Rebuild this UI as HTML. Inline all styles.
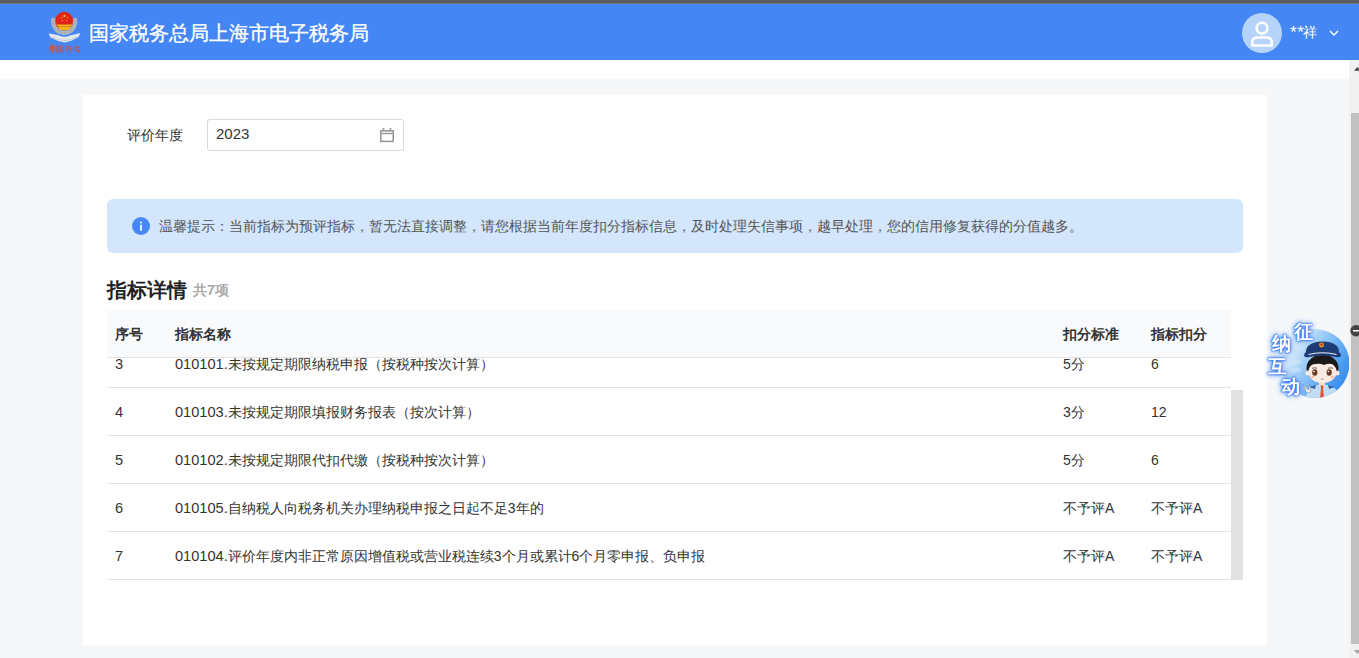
<!DOCTYPE html>
<html><head><meta charset="utf-8">
<style>
*{box-sizing:border-box;margin:0;padding:0}
html,body{width:1359px;height:658px;overflow:hidden;background:#f6f7f9;font-family:"Liberation Sans",sans-serif;color:#333}
div{position:absolute}
.topbar{left:0;top:0;width:1359px;height:4px;background:linear-gradient(#5b5b5f 0,#5b5b5f 3px,#6f7683 3px,#6f7683 4px)}
.header{left:0;top:4px;width:1359px;height:56px;background:#4486f3}
.white{left:0;top:60px;width:1349px;height:19px;background:#fff}
.vscroll{left:1349px;top:60px;width:15px;height:598px;background:#f1f1f1}
.vthumb{left:2px;top:53px;width:11px;height:531px;background:#c1c1c1}
.card{left:83px;top:95px;width:1184px;height:550px;background:#fff}
.title{left:89px;top:20px;font-size:20px;color:#fff;white-space:nowrap;-webkit-text-stroke:0.35px #fff}
.avatar{left:1242px;top:13px;width:40px;height:40px;border-radius:50%;background:#b6d3fa}
.uname{left:1290px;top:23px;font-size:14px;color:#fff;white-space:nowrap}
.label{left:127px;top:127px;font-size:14px;color:#333;white-space:nowrap}
.input{left:207px;top:119px;width:197px;height:32px;border:1px solid #d9d9d9;border-radius:3px;background:#fff}
.input span{position:absolute;left:8px;top:6px;font-size:14px;color:#333}
.alert{left:107px;top:199px;width:1136px;height:54px;background:#d3e6fc;border-radius:6px}
.alert .tx{left:52px;top:19px;font-size:14px;color:#555;white-space:nowrap}
.h2{left:107px;top:277px;font-size:20px;font-weight:bold;color:#222;white-space:nowrap}
.h2s{left:193px;top:282px;font-size:14px;font-weight:bold;color:#aaa;white-space:nowrap}
.thead{left:107px;top:310px;width:1124px;height:48px;background:#f9fafc;border-bottom:1px solid #e4e4e4}
.th{top:16px;font-size:14px;font-weight:bold;color:#333;white-space:nowrap}
.row{left:107px;width:1124px;border-bottom:1px solid #e4e4e4;height:48px;background:#fff}
.td{font-size:14px;color:#333;white-space:nowrap;top:16px}
.n{font-size:14.6px}
.c1{left:8px}.c2{left:68px}.c3{left:956px}.c4{left:1044px}
.tscroll{left:1231px;top:390px;width:12px;height:190px;background:#e1e1e1}
.mascot-txt{font-size:19px;font-weight:bold;color:#fff;line-height:1;text-shadow:0 0 1px #1f62f0,0 0 1.5px #1f62f0,0 0 2.5px #2f70f3,0 0 4px #4c8cf6,0 0 7px #7fb0f9}
svg{position:absolute}
</style></head><body>
<div class="topbar"></div>
<div class="header"></div>
<div class="white"></div>
<div class="card"></div>

<!-- emblem -->
<svg style="left:44px;top:8px" width="42" height="50" viewBox="0 0 42 50">
  <defs>
    <radialGradient id="eg" cx="0.5" cy="0.35" r="0.65"><stop offset="0" stop-color="#e8281c"/><stop offset="0.7" stop-color="#dc2216"/><stop offset="1" stop-color="#ee8a1c"/></radialGradient>
  </defs>
  <path d="M10 10 A11 11 0 0 0 20.2 25 A11 11 0 0 0 30.4 10" fill="none" stroke="#b4b9c0" stroke-width="4"/>
  <path d="M10 10 A11 11 0 0 0 20.2 25 A11 11 0 0 0 30.4 10" fill="none" stroke="#8e949c" stroke-width="1.2" stroke-dasharray="1 1.6"/>
  <path d="M4.5 25.5 Q12 26.5 15 27.5 Q20.5 30 26 27.5 Q29 26.5 36.5 25 L34.5 29 Q27 33.5 20.5 34.5 Q14 33.5 6.5 29.5 Z" fill="#e2e5e9"/>
  <path d="M8 29 Q20.5 36 33 29" fill="none" stroke="#c8ccd2" stroke-width="1"/>
  <ellipse cx="20.2" cy="13.3" rx="9" ry="9.5" fill="url(#eg)"/>
  <path d="M13 16.5 H28 L27 18.5 H14 Z M14.5 18.5 H26.5 L25.5 21.5 Q20.5 23 15.5 21.5 Z" fill="#f2b41e"/>
  <path d="M14 18.6 H27" stroke="#e0701a" stroke-width="0.6"/>
  <circle cx="20.5" cy="8" r="1.1" fill="#f8d440"/>
  <circle cx="17.6" cy="9.8" r="0.55" fill="#f8d440"/><circle cx="23.4" cy="9.8" r="0.55" fill="#f8d440"/>
  <circle cx="18.3" cy="12.3" r="0.55" fill="#f8d440"/><circle cx="22.7" cy="12.3" r="0.55" fill="#f8d440"/>
  <g fill="none" stroke="#dc4a32" stroke-width="0.75" stroke-linecap="round">
    <path d="M8.5 36.5 V45.5 M6.5 39 H10.5 V42 H6.5 Z"/>
    <path d="M13 38 H19.5 V44 H13 Z M14.5 40 H18 M14.5 42 H18 M16 39 V43"/>
    <path d="M22 38.5 H25 M23.5 37.5 V44 M22 41 H25 M26 38 Q27 41 26 44 M27 40.5 H28"/>
    <path d="M29.5 39 L31 41 M30 43 L32 41.5 M33 37.5 V44 M32 39.5 H35.5 M34 42 H35.5 V44 H34 Z"/>
  </g>
</svg>

<div class="title">国家税务总局上海市电子税务局</div>
<div class="avatar"></div>
<svg style="left:1242px;top:13px" width="40" height="40" viewBox="0 0 40 40">
  <circle cx="20" cy="15.2" r="5.4" fill="none" stroke="#fff" stroke-width="2.6"/>
  <path d="M10.3 32.5 V29 Q10.3 24.5 16 24.5 H24 Q29.7 24.5 29.7 29 V32.5 Z" fill="none" stroke="#fff" stroke-width="2.6" stroke-linejoin="round"/>
</svg>
<div class="uname" style="left:1290px;top:23px;font-size:17px;line-height:20px;letter-spacing:0.6px">**</div><div class="uname" style="left:1302.5px;top:24px;font-size:13.5px;line-height:18px">祥</div>
<svg style="left:1327px;top:28px" width="14" height="10" viewBox="0 0 14 10">
  <path d="M3 3 L7 7 L11 3" fill="none" stroke="#fff" stroke-width="1.4"/>
</svg>

<div class="label">评价年度</div>
<div class="input"><span style="font-size:15px;top:5px">2023</span></div>
<svg style="left:378px;top:126px" width="18" height="18" viewBox="0 0 18 18">
  <g fill="none" stroke="#9a9a9a" stroke-width="1.6">
    <rect x="2.8" y="4.8" width="12.4" height="10.6"/>
    <path d="M2.75 7.5 H15.25 M5.5 2 V5 M12.5 2 V5"/>
  </g>
</svg>

<div class="alert"><div class="tx">温馨提示：当前指标为预评指标，暂无法直接调整，请您根据当前年度扣分指标信息，及时处理失信事项，越早处理，您的信用修复获得的分值越多。</div></div>
<svg style="left:132px;top:217px" width="18" height="18" viewBox="0 0 18 18">
  <circle cx="9" cy="9" r="9" fill="#4689f4"/>
  <rect x="8.15" y="4.7" width="1.7" height="1.7" fill="#fff"/>
  <rect x="8.15" y="7.7" width="1.7" height="6" fill="#fff"/>
</svg>

<div class="h2">指标详情</div>
<div class="h2s">共7项</div>

<div class="row" style="top:340px"><div class="td c1"><span class="n">3</span></div><div class="td c2"><span class="n">010101.</span>未按规定期限纳税申报（按税种按次计算）</div><div class="td c3">5分</div><div class="td c4">6</div></div>
<div class="row" style="top:388px"><div class="td c1"><span class="n">4</span></div><div class="td c2"><span class="n">010103.</span>未按规定期限填报财务报表（按次计算）</div><div class="td c3">3分</div><div class="td c4">12</div></div>
<div class="row" style="top:436px"><div class="td c1"><span class="n">5</span></div><div class="td c2"><span class="n">010102.</span>未按规定期限代扣代缴（按税种按次计算）</div><div class="td c3">5分</div><div class="td c4">6</div></div>
<div class="row" style="top:484px"><div class="td c1"><span class="n">6</span></div><div class="td c2"><span class="n">010105.</span>自纳税人向税务机关办理纳税申报之日起不足3年的</div><div class="td c3">不予评A</div><div class="td c4">不予评A</div></div>
<div class="row" style="top:532px"><div class="td c1"><span class="n">7</span></div><div class="td c2"><span class="n">010104.</span>评价年度内非正常原因增值税或营业税连续3个月或累计6个月零申报、负申报</div><div class="td c3">不予评A</div><div class="td c4">不予评A</div></div>
<div class="thead"><div class="th c1">序号</div><div class="th c2">指标名称</div><div class="th c3">扣分标准</div><div class="th c4">指标扣分</div></div>
<div class="tscroll"></div>

<!-- mascot -->
<svg style="left:1262px;top:316px" width="97" height="90" viewBox="0 0 97 90">
  <defs>
    <linearGradient id="mg" x1="0" y1="0.2" x2="1" y2="0.8"><stop offset="0" stop-color="#d6e8fb" stop-opacity="0.2"/><stop offset="0.35" stop-color="#a9d3f7"/><stop offset="0.7" stop-color="#5aa8f2"/><stop offset="1" stop-color="#2c86ec"/></linearGradient>
    <clipPath id="mc"><circle cx="53" cy="47.5" r="34.5"/></clipPath>
  </defs>
  <circle cx="53" cy="47.5" r="34.5" fill="url(#mg)"/>
  <ellipse cx="33" cy="46" rx="6" ry="3" fill="#cfe6fb" opacity="0.7"/>
  <ellipse cx="34" cy="54" rx="5" ry="2.5" fill="#cfe6fb" opacity="0.6"/>
  <g clip-path="url(#mc)">
    <path d="M43 90 Q43 73 52 70 L56 69 H65 L69 70 Q78 73 78 90 Z" fill="#c2ddf5"/>
    <path d="M47 71 L54 69 L53 73 Z M73 71 L66 69 L67 73 Z" fill="#3a5fa0"/>
    <rect x="57" y="65" width="6" height="5" fill="#f6ddd0"/>
    <path d="M58.5 69.5 H61.5 L61 72 L62 82 H58 L59 72 Z" fill="#e5532f"/>
    <path d="M41 68 L44.5 77 L49 76 L48 68 L46.5 74 Z" fill="#fbe9df" stroke="#6a86ad" stroke-width="0.5"/>
  </g>
  <ellipse cx="60.5" cy="52" rx="16" ry="13.5" fill="#1a1a1a"/>
  <ellipse cx="60.5" cy="56" rx="14.2" ry="11" fill="#fbeae1"/>
  <ellipse cx="45.5" cy="57" rx="2" ry="2.6" fill="#fbeae1"/>
  <ellipse cx="75.5" cy="57" rx="2" ry="2.6" fill="#fbeae1"/>
  <path d="M46 50 Q50 42 60.5 42 Q71 42 75 50 Q68 46 62 49 Q56 46 46 50 Z" fill="#1a1a1a"/>
  <path d="M50 52.3 Q52.5 51.3 55 52.3 M66 52.3 Q68.5 51.3 71 52.3" fill="none" stroke="#3a2a20" stroke-width="0.7"/>
  <ellipse cx="52.8" cy="56.5" rx="2.6" ry="3.2" fill="#6b3a22"/>
  <ellipse cx="67.2" cy="56.5" rx="2.6" ry="3.2" fill="#6b3a22"/>
  <circle cx="52" cy="55.5" r="0.8" fill="#fff"/><circle cx="66.4" cy="55.5" r="0.8" fill="#fff"/>
  <ellipse cx="50.5" cy="61" rx="2.2" ry="1.1" fill="#f7b9a6"/>
  <ellipse cx="70.5" cy="61" rx="2.2" ry="1.1" fill="#f7b9a6"/>
  <path d="M58.8 62.8 Q60.3 63.8 61.8 62.8" fill="none" stroke="#8a5040" stroke-width="0.6"/>
  <path d="M44 36 Q44 26 60.5 25.5 Q77 26 77 36 Q79 37 79 40 Q77 42 74 41 Q60.5 38 47 41 Q44 42 42 40 Q42 37 44 36 Z" fill="#1e3c74"/>
  <path d="M46.5 38.5 Q60.5 35 74.5 38.5" fill="none" stroke="#eef2f8" stroke-width="1"/>
  <circle cx="59.5" cy="29" r="2.4" fill="#eaa623"/>
  <circle cx="59.5" cy="28.6" r="1.3" fill="#d6301c"/>
</svg>
<div class="mascot-txt" style="left:1294px;top:322px">征</div>
<div class="mascot-txt" style="left:1272px;top:334px">纳</div>
<div class="mascot-txt" style="left:1268px;top:357px">互</div>
<div class="mascot-txt" style="left:1281px;top:377px">动</div>

<div class="vscroll"><div class="vthumb"></div></div>
<svg style="left:1349px;top:60px" width="15" height="598" viewBox="0 0 15 598">
  <path d="M5 10.8 L8.4 7 L11.8 10.8 Z" fill="#4a4a4a"/>
  <path d="M5 590 L8.4 593.9 L11.8 590 Z" fill="#a3a3a3"/>
</svg>
<svg style="left:1349px;top:322px" width="10" height="16" viewBox="0 0 10 16">
  <circle cx="7" cy="8.7" r="5.7" fill="#454545"/>
  <rect x="4" y="8" width="6" height="1.5" fill="#fff"/>
</svg>
</body></html>
